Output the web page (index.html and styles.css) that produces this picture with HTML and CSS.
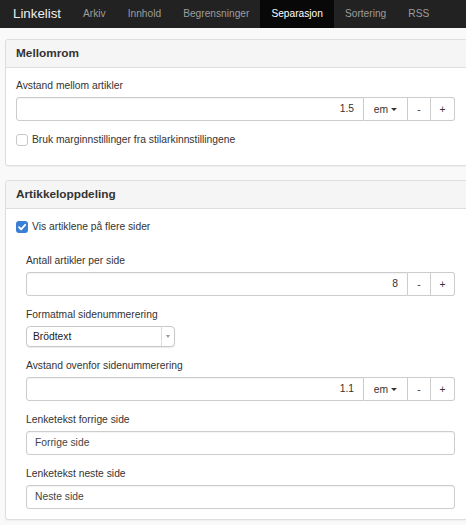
FILE: index.html
```html
<!DOCTYPE html>
<html lang="no">
<head>
<meta charset="utf-8">
<title>Linkelist</title>
<link rel="stylesheet" href="styles.css">
</head>
<body>
<nav class="navbar">
  <span class="brand">Linkelist</span>
  <ul class="nav">
    <li><a>Arkiv</a></li>
    <li><a>Innhold</a></li>
    <li><a>Begrensninger</a></li>
    <li class="active"><a>Separasjon</a></li>
    <li><a>Sortering</a></li>
    <li><a>RSS</a></li>
  </ul>
</nav>
<main class="content">
  <section class="panel panel-first">
    <div class="panel-heading"><h3 class="panel-title">Mellomrom</h3></div>
    <div class="panel-body">
      <div class="form-group">
        <label class="control-label">Avstand mellom artikler</label>
        <div class="input-group">
          <div class="form-control num">1.5</div>
          <div class="btn btn-unit">em <span class="caret"></span></div>
          <div class="btn btn-minus">-</div>
          <div class="btn btn-plus">+</div>
        </div>
      </div>
      <div class="checkbox checkbox-last">
        <span class="cb"></span>
        <span>Bruk marginnstillinger fra stilarkinnstillingene</span>
      </div>
    </div>
  </section>

  <section class="panel">
    <div class="panel-heading"><h3 class="panel-title">Artikkeloppdeling</h3></div>
    <div class="panel-body">
      <div class="checkbox checkbox-top">
        <span class="cb cb-checked">
          <svg viewBox="0 0 12 12" width="12" height="12"><path d="M3 6.2 L5.1 8.3 L9.2 3.8" fill="none" stroke="#fff" stroke-width="1.8" stroke-linecap="round" stroke-linejoin="round"/></svg>
        </span>
        <span>Vis artiklene på flere sider</span>
      </div>
      <div class="nested">
        <div class="form-group">
          <label class="control-label">Antall artikler per side</label>
          <div class="input-group">
            <div class="form-control num">8</div>
            <div class="btn btn-minus">-</div>
            <div class="btn btn-plus">+</div>
          </div>
        </div>
        <div class="form-group">
          <label class="control-label">Formatmal sidenummerering</label>
          <div class="select">
            <span class="select-text">Brödtext</span>
            <span class="select-arrow"><span class="mini-caret"></span></span>
          </div>
        </div>
        <div class="form-group">
          <label class="control-label">Avstand ovenfor sidenummerering</label>
          <div class="input-group">
            <div class="form-control num">1.1</div>
            <div class="btn btn-unit">em <span class="caret"></span></div>
            <div class="btn btn-minus">-</div>
            <div class="btn btn-plus">+</div>
          </div>
        </div>
        <div class="form-group">
          <label class="control-label">Lenketekst forrige side</label>
          <div class="form-control text">Forrige side</div>
        </div>
        <div class="form-group form-group-last">
          <label class="control-label">Lenketekst neste side</label>
          <div class="form-control text">Neste side</div>
        </div>
      </div>
    </div>
  </section>
</main>
</body>
</html>
```

FILE: styles.css
```css
* { box-sizing: border-box; }

html, body {
  margin: 0;
  padding: 0;
}

body {
  background: #f9f9f9;
  font-family: "Liberation Sans", Arial, Helvetica, sans-serif;
  font-size: 10.3px;
  color: #333;
  width: 466px;
  overflow: hidden;
}

/* navbar */
.navbar {
  display: flex;
  height: 28px;
  background: #222;
}

.brand {
  padding: 0 11px 0 13px;
  line-height: 28px;
  font-size: 13.3px;
  color: #eee;
}

.nav {
  display: flex;
  margin: 0;
  padding: 0;
  list-style: none;
}

.nav li a {
  display: block;
  padding: 0 11px;
  line-height: 28px;
  font-size: 10.2px;
  color: #9d9d9d;
}

.nav li.active a {
  background: #080808;
  color: #fff;
}

/* content */
.content {
  padding: 11px 0 0 5px;
}

.panel {
  background: #fff;
  border: 1px solid #ddd;
  border-radius: 3px;
  margin: 0 -2px 14px 0;
  box-shadow: 0 1px 1px rgba(0,0,0,0.04);
}

.panel-heading {
  background: #f5f5f5;
  border-bottom: 1px solid #ddd;
  border-radius: 3px 3px 0 0;
  padding: 7px 10px;
}

.panel-title {
  margin: 0;
  font-size: 11.8px;
  line-height: 13px;
  font-weight: bold;
  color: #333;
}

.panel-body {
  padding: 10px 12px 10px 10px;
}

.nested {
  padding-left: 10px;
}

.form-group {
  margin-bottom: 11px;
}

.form-group-last {
  margin-bottom: 0;
}

.control-label {
  display: block;
  line-height: 15px;
  margin-bottom: 4px;
  color: #333;
}

.input-group {
  display: flex;
  height: 24px;
}

.form-control {
  height: 24px;
  border: 1px solid #ccc;
  border-radius: 3px;
  background: #fff;
  color: #555;
  line-height: 22px;
  box-shadow: inset 0 1px 1px rgba(0,0,0,0.05);
}

.input-group .form-control {
  flex: 1;
  border-radius: 3px 0 0 3px;
  height: 100%;
}

.form-control.num {
  text-align: right;
  padding-right: 9px;
  color: #333;
}

.form-control.text {
  padding-left: 8px;
  color: #444;
}

.btn {
  display: flex;
  align-items: center;
  justify-content: center;
  border: 1px solid #ccc;
  border-left: none;
  background: #fff;
  color: #333;
  height: 100%;
}

.btn-unit { width: 44px; }
.btn-minus { width: 23px; }
.btn-plus {
  width: 24px;
  border-radius: 0 3px 3px 0;
}

.caret {
  display: inline-block;
  width: 0;
  height: 0;
  margin-left: 3px;
  border-top: 3px solid #333;
  border-left: 3px solid transparent;
  border-right: 3px solid transparent;
}

/* checkbox */
.checkbox {
  display: flex;
  align-items: center;
  line-height: 16px;
}

.checkbox-last {
  margin-top: 11px;
  margin-bottom: 7px;
}

.checkbox-top {
  margin-bottom: 18px;
}

.cb {
  width: 12px;
  height: 12px;
  margin-right: 4px;
  border: 1px solid #c8c8c8;
  border-radius: 3px;
  background: #fff;
  display: flex;
  align-items: center;
  justify-content: center;
}

.cb-checked {
  border: none;
  background: #3b7fd4;
}

.cb svg { display: block; }

/* select */
.select {
  display: flex;
  width: 149px;
  height: 21px;
  border: 1px solid #c8c8c8;
  border-radius: 4px;
  background: #fff;
  box-shadow: 0 1px 1px rgba(0,0,0,0.08);
}

.select-text {
  flex: 1;
  padding-left: 6px;
  line-height: 19px;
  color: #222;
}

.select-arrow {
  width: 13px;
  border-left: 1px solid #ddd;
  display: flex;
  align-items: center;
  justify-content: center;
}

.mini-caret {
  width: 0;
  height: 0;
  border-top: 3px solid #999;
  border-left: 2px solid transparent;
  border-right: 2px solid transparent;
}
```
